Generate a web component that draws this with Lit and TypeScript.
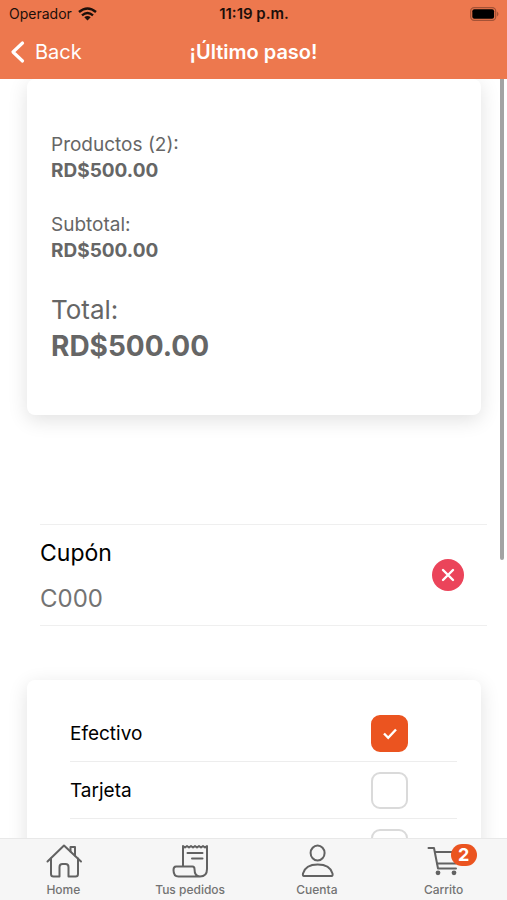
import { LitElement, html, css, svg } from "lit";
import { customElement, state } from "lit/decorators.js";

const homeIcon = svg`<path d="M2.500 18.500 L19 2.500 L36 18.500"/><path d="M6 15.500 V31 Q6 33.500 8.500 33.500 H14.500 V24 Q14.500 21 17.500 21 H20.500 Q23.500 21 23.500 24 V33.500 H30.500 Q33 33.500 33 31 V15.500"/><path d="M25.500 8.500 V4 H30 V12.500"/>`;
const ordersIcon = svg`<path d="M11 23.500 V3 L13 4.500 L15 3 L17 4.500 L19 3 L21 4.500 L23 3 L25 4.500 L27 3 L29 4.500 L31 3 L33 4.500 L35 3 V26 Q35 33.500 28 33.500 H6.500 Q1.500 33.500 1.500 27 Q1.500 23.500 4 23.500 H20.500 Q22.500 23.500 22.500 26 Q22.500 33.500 28 33.500"/><path d="M15.500 10 H30.500 M20 15.500 H30.500"/>`;
const accountIcon = svg`<ellipse cx="18.600" cy="10" rx="7" ry="7.500"/><path d="M5 33 Q3.500 33 4 30.500 Q6.500 21.500 18.700 21.500 Q31 21.500 33.500 30.500 Q34 33 32.500 33 Z"/>`;
const cartIcon = svg`<path d="M2.500 5 H8 L12 25.500 H30"/><path d="M9 9 H33 L30 20.500 H11"/><circle class="dot" cx="12" cy="29.800" r="2.400"/><circle class="dot" cx="28" cy="29.800" r="2.400"/>`;

@customElement("app-root")
export class AppRoot extends LitElement {
  static styles = css`
    * { box-sizing: border-box; }
    :host {
      display: flex;
      flex-direction: column;
      height: 100vh;
      overflow: hidden;
      background: #fff;
      color: #000;
      font-family: Inter, "Liberation Sans", sans-serif;
    }
    button, input { font: inherit; }
    button { border: 0; padding: 0; background: none; }
    header {
      flex: none;
      background: #ed784e;
    }
    .status {
      display: grid;
      grid-template-columns: 1fr auto 1fr;
      align-items: center;
      height: 27px;
      padding: 0 8px 0 9px;
      font-size: 14px;
      color: #1c0f0a;
    }
    .carrier { display: flex; align-items: center; gap: 6px; }
    .clock { font-size: 15px; font-weight: 600; }
    .battery { justify-self: end; display: block; }
    .nav {
      display: grid;
      grid-template-columns: 1fr auto 1fr;
      align-items: center;
      height: 52px;
      padding: 0 10px 2px;
      color: #fff;
      font-size: 20px;
    }
    .back { display: flex; align-items: center; gap: 10px; color: #fff; justify-self: start; }
    h1 { margin: 0; font-size: 20px; font-weight: 600; }
    .content {
      position: relative;
      flex: 1;
      min-height: 0;
      overflow: hidden;
    }
    .scroll {
      position: absolute;
      top: 0;
      right: 3px;
      width: 4px;
      height: 63.400%;
      border-radius: 0 0 2px 2px;
      background: #a3a3a3;
    }
    .card {
      margin: 0 26px 0 27px;
      border-radius: 8px;
      background: #fff;
      box-shadow: 0 5px 20px rgba(0, 0, 0, 0.12);
    }
    .summary {
      display: flex;
      flex-direction: column;
      gap: 28px;
      padding: 53px 24px 51px;
      color: #666;
      font-size: 19px;
      line-height: 26px;
    }
    .summary p { margin: 0; }
    .amount { font-weight: 700; }
    .total { font-size: 26px; line-height: 36px; }
    .total .amount { font-size: 28px; }
    .coupon {
      display: flex;
      align-items: center;
      margin: 109px 20px 0 40px;
      padding-right: 23px;
      border: solid #efefef;
      border-width: 1px 0;
    }
    .field {
      display: flex;
      flex-direction: column;
      flex: 1;
      min-width: 0;
      gap: 18px;
      padding: 14px 0 12px;
      font-size: 23px;
      line-height: 28px;
    }
    .field input {
      width: 100%;
      height: 28px;
      padding: 0;
      border: 0;
      outline: 0;
      background: none;
      color: #737373;
      font-size: 24px;
    }
    .clear {
      display: grid;
      place-items: center;
      width: 32px;
      height: 32px;
      border-radius: 50%;
      background: #eb445a;
    }
    .methods {
      margin-top: 54px;
      padding: 25px 24px 25px 43px;
    }
    .method {
      display: flex;
      align-items: center;
      justify-content: space-between;
      height: 57px;
      padding-right: 49px;
      border-bottom: 1px solid #ededed;
      font-size: 19px;
    }
    .method input {
      appearance: none;
      width: 37px;
      height: 37px;
      margin: 0;
      border: 2px solid #dadada;
      border-radius: 9px;
      background: #fff;
    }
    .box { display: grid; }
    .box > * { grid-area: 1 / 1; }
    .box svg { place-self: center; pointer-events: none; }
    .method input:checked { background: #eb5420; border-color: #eb5420; }
    .tabs {
      display: flex;
      flex: none;
      height: 62px;
      border-top: 1px solid #e8e8e8;
      background: #f6f6f6;
    }
    .tab {
      flex: 1;
      display: flex;
      flex-direction: column;
      align-items: center;
      gap: 3px;
      padding-top: 4px;
      color: #737373;
      font-size: 12px;
      font-weight: 500;
      line-height: 16px;
      text-decoration: none;
    }
    .icon { position: relative; height: 36px; }
    .icon svg {
      display: block;
      overflow: visible;
      fill: none;
      stroke: #626262;
      stroke-width: 2;
      stroke-linejoin: round;
      stroke-linecap: round;
    }
    .icon .dot { fill: #626262; stroke: none; }
    .badge {
      position: absolute;
      top: 1px;
      left: 25px;
      width: 26px;
      border-radius: 11px;
      background: #eb5420;
      color: #fff;
      font-size: 18px;
      font-weight: 700;
      line-height: 22px;
      text-align: center;
    }
  `;

  @state() private coupon = "C000";
  @state() private selected = "Efectivo";

  private methods = [
    { name: "Efectivo", shown: true },
    { name: "Tarjeta", shown: true },
    { name: "Otro", shown: false },
  ];

  private tabs = [
    { name: "Home", icon: homeIcon, badge: 0 },
    { name: "Tus pedidos", icon: ordersIcon, badge: 0 },
    { name: "Cuenta", icon: accountIcon, badge: 0 },
    { name: "Carrito", icon: cartIcon, badge: 2 },
  ];

  render() {
    return html`
      <header>
        <div class="status">
          <span class="carrier">Operador
            <svg width="19" height="14" viewBox="0 0 19 14" fill="none" stroke="#1c0f0a" stroke-width="2.4">
              <path d="M1 5 Q9.500 -2.200 18 5 M4 8.300 Q9.500 3.600 15 8.300"/>
              <path d="M6.300 10.200 Q9.500 7.600 12.700 10.200 L9.500 13.500 Z" fill="#1c0f0a" stroke="none"/>
            </svg>
          </span>
          <span class="clock">11:19 p.m.</span>
          <svg class="battery" width="29" height="14" viewBox="0 0 29 14">
            <rect x=".7" y=".7" width="25" height="12.600" rx="3.500" fill="none" stroke="#a45236" stroke-width="1.300"/>
            <rect x="2.300" y="2.300" width="21.800" height="9.400" rx="2" fill="#000"/>
            <path d="M27 4.500 Q30 7 27 9.500Z" fill="#a45236"/>
          </svg>
        </div>
        <div class="nav">
          <button class="back">
            <svg width="15" height="24" viewBox="0 0 15 24" fill="none" stroke="#fff" stroke-width="3.200" stroke-linecap="round" stroke-linejoin="round"><path d="M12.500 3 L3 12 L12.500 21"/></svg>
            Back
          </button>
          <h1>¡Último paso!</h1>
        </div>
      </header>
      <main class="content">
        <section class="card summary">
          <div><p>Productos (2):</p><p class="amount">RD$500.00</p></div>
          <div><p>Subtotal:</p><p class="amount">RD$500.00</p></div>
          <div class="total"><p>Total:</p><p class="amount">RD$500.00</p></div>
        </section>
        <section class="coupon">
          <div class="field">
            <label for="coupon">Cupón</label>
            <input id="coupon" type="text" .value=${this.coupon}
              @input=${(e: Event) => (this.coupon = (e.target as HTMLInputElement).value)} />
          </div>
          <button class="clear" aria-label="Quitar cupón" @click=${() => (this.coupon = "")}>
            <svg width="14" height="14" viewBox="0 0 14 14" stroke="#fff" stroke-width="2.400" stroke-linecap="round"><path d="M2 2 L12 12 M12 2 L2 12"/></svg>
          </button>
        </section>
        <section class="card methods">
          ${this.methods.map(
            (m, i) => html`
              <div class="method">
                <label for="method-${i}">${m.shown ? m.name : ""}</label>
                <span class="box">
                  <input id="method-${i}" type="checkbox" aria-label=${m.name}
                    .checked=${this.selected === m.name}
                    @change=${() => (this.selected = m.name)} />
                  ${this.selected === m.name
                    ? html`<svg width="16" height="14" viewBox="0 0 16 14" fill="none" stroke="#fff" stroke-width="2.400"><path d="M2 7.500 L6.200 11.800 L14 3.500"/></svg>`
                    : ""}
                </span>
              </div>
            `
          )}
        </section>
        <div class="scroll"></div>
      </main>
      <nav class="tabs">
        ${this.tabs.map(
          (t) => html`
            <a class="tab" href="#">
              <span class="icon">
                <svg width="36" height="36" viewBox="0 0 36 36">${t.icon}</svg>
                ${t.badge ? html`<span class="badge">${t.badge}</span>` : ""}
              </span>
              ${t.name}
            </a>
          `
        )}
      </nav>
    `;
  }
}
